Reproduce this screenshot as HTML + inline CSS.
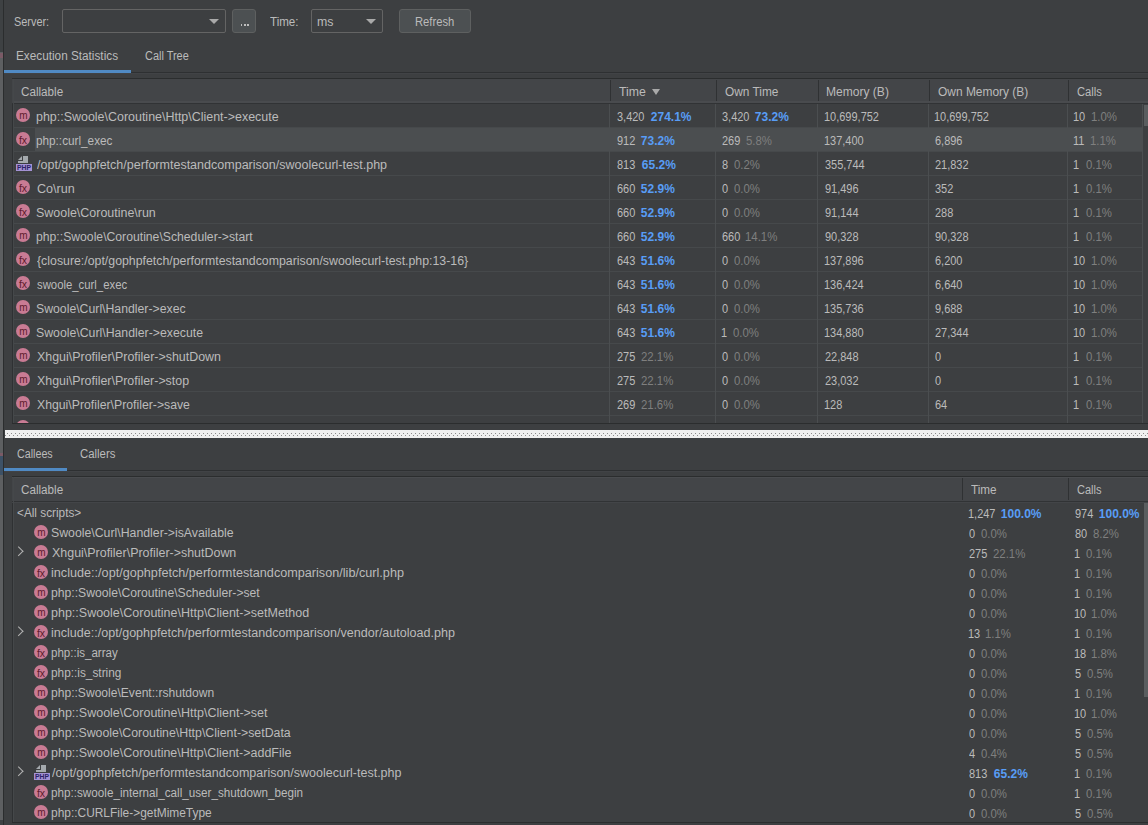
<!DOCTYPE html><html><head><meta charset="utf-8"><style>
html,body{margin:0;padding:0}
body{width:1148px;height:825px;overflow:hidden;position:relative;background:#3d3f41;font-family:"Liberation Sans", sans-serif}
.t{position:absolute;white-space:pre;line-height:16px;height:16px;display:block;transform-origin:0 0}
.combo{position:absolute;border:1px solid #646464;border-radius:2px}
.btn{position:absolute;border:1px solid #5e6060;border-radius:3px;background:#4c5052}
.arrow{position:absolute;width:0;height:0;border-left:5px solid transparent;border-right:5px solid transparent;border-top:5px solid #a9a9a9}
.sortarrow{position:absolute;width:0;height:0;border-left:4px solid transparent;border-right:4px solid transparent;border-top:6px solid #a9a9a9}
.ico{position:absolute;width:14px;height:14px;border-radius:50%;background:#c97b94;overflow:hidden}
.ico span{position:absolute;left:0;top:1px;width:14px;line-height:14px;text-align:center;font-size:10.5px;color:#5e1a2c}
.ico span.m{top:0.5px;font-size:10px;left:0.5px}
.phpico{position:absolute;width:16px;height:16px}
.phpico .pg{position:absolute;left:4px;top:0;width:8px;height:7px;background:#9a9ea2}
.phpico .lbl{position:absolute;left:0;top:8px;width:16px;height:7px;background:#8877cc;color:#2a2060;font-size:7px;line-height:7px;font-weight:bold;text-align:center;overflow:hidden}
.chev{position:absolute;width:5.5px;height:5.5px;border-right:1.6px solid #b4b4b4;border-bottom:1.6px solid #b4b4b4;transform:rotate(-45deg)}
.splitter{position:absolute;background-color:#f2f2f2;background-image:radial-gradient(#6a6a6a 0.7px, transparent 0.9px),radial-gradient(#6a6a6a 0.7px, transparent 0.9px);background-size:5px 5px;background-position:1px 1px, 3.5px 3.5px}
</style></head><body><div style="position:absolute;left:0px;top:0px;width:3px;height:825px;background:#3e4143;"></div><div style="position:absolute;left:0px;top:52px;width:3px;height:768px;background:#5d5f61;"></div><div style="position:absolute;left:0px;top:53px;width:3px;height:5px;background:#7a5a66;"></div><div style="position:absolute;left:0px;top:453px;width:3px;height:3px;background:#7a5a66;"></div><div style="position:absolute;left:0px;top:456px;width:3px;height:19px;background:#3d5166;"></div><div style="position:absolute;left:3px;top:0px;width:1px;height:825px;background:#2b2d2e;"></div><div class="combo" style="left:62px;top:9px;width:162px;height:22px"></div><div class="arrow" style="left:209px;top:19px"></div><div class="btn" style="left:232px;top:9px;width:22px;height:22px"></div><div style="position:absolute;left:240.6px;top:24px;width:1.7px;height:2px;background:#bdbdbd;"></div><div style="position:absolute;left:243.9px;top:24px;width:1.7px;height:2px;background:#bdbdbd;"></div><div style="position:absolute;left:247.2px;top:24px;width:1.7px;height:2px;background:#bdbdbd;"></div><div class="combo" style="left:311px;top:9px;width:70px;height:22px"></div><div class="arrow" style="left:366px;top:19px"></div><div class="btn" style="left:399px;top:9px;width:70px;height:22px"></div><div style="position:absolute;left:4px;top:72px;width:1144px;height:1px;background:#2e3032;"></div><div style="position:absolute;left:4px;top:70px;width:127px;height:3px;background:#508ac4;"></div><div style="position:absolute;left:4px;top:73px;width:1144px;height:1px;background:#414346;"></div><div style="position:absolute;left:12px;top:78px;width:1px;height:345px;background:#2f3133;"></div><div style="position:absolute;left:12px;top:78px;width:1136px;height:1px;background:#2b2d2e;"></div><div style="position:absolute;left:12px;top:79px;width:1136px;height:24px;background:#434548;"></div><div style="position:absolute;left:12px;top:103px;width:1136px;height:1px;background:#313335;"></div><div style="position:absolute;left:610px;top:80px;width:1px;height:22px;background:#2f3133;"></div><div style="position:absolute;left:716px;top:80px;width:1px;height:22px;background:#2f3133;"></div><div style="position:absolute;left:818px;top:80px;width:1px;height:22px;background:#2f3133;"></div><div style="position:absolute;left:929px;top:80px;width:1px;height:22px;background:#2f3133;"></div><div style="position:absolute;left:1068px;top:80px;width:1px;height:22px;background:#2f3133;"></div><div style="position:absolute;left:13px;top:101px;width:1135px;height:2px;background:#494b4e;"></div><div class="sortarrow" style="left:652px;top:89px"></div><div style="position:absolute;left:13px;top:127px;width:1130px;height:1px;background:#46494b;"></div><div class="ico" style="left:16px;top:108px"><span class="m">m</span></div><div style="position:absolute;left:13px;top:128px;width:1130px;height:23px;background:#4b4e50;"></div><div style="position:absolute;left:13px;top:128px;width:22px;height:23px;background:#3f4244;"></div><div style="position:absolute;left:13px;top:151px;width:1130px;height:1px;background:#46494b;"></div><div class="ico" style="left:16px;top:132px"><span class="fx">fx</span></div><div style="position:absolute;left:13px;top:175px;width:1130px;height:1px;background:#46494b;"></div><svg style="position:absolute;left:16px;top:155px" width="16" height="16"><path d="M2 5 L6 1 L6 5 Z M7 1 H12 V8 H2 V6 H7 Z" fill="#a4a9ad"/><rect x="0" y="9" width="16" height="7" fill="#a392d4"/><text x="8" y="15.3" text-anchor="middle" font-family="Liberation Sans" font-weight="bold" font-size="8" textLength="14" lengthAdjust="spacingAndGlyphs" fill="#2b2166">PHP</text></svg><div style="position:absolute;left:13px;top:199px;width:1130px;height:1px;background:#46494b;"></div><div class="ico" style="left:16px;top:180px"><span class="fx">fx</span></div><div style="position:absolute;left:13px;top:223px;width:1130px;height:1px;background:#46494b;"></div><div class="ico" style="left:16px;top:204px"><span class="fx">fx</span></div><div style="position:absolute;left:13px;top:247px;width:1130px;height:1px;background:#46494b;"></div><div class="ico" style="left:16px;top:228px"><span class="m">m</span></div><div style="position:absolute;left:13px;top:271px;width:1130px;height:1px;background:#46494b;"></div><div class="ico" style="left:16px;top:252px"><span class="fx">fx</span></div><div style="position:absolute;left:13px;top:295px;width:1130px;height:1px;background:#46494b;"></div><div class="ico" style="left:16px;top:276px"><span class="fx">fx</span></div><div style="position:absolute;left:13px;top:319px;width:1130px;height:1px;background:#46494b;"></div><div class="ico" style="left:16px;top:300px"><span class="m">m</span></div><div style="position:absolute;left:13px;top:343px;width:1130px;height:1px;background:#46494b;"></div><div class="ico" style="left:16px;top:324px"><span class="m">m</span></div><div style="position:absolute;left:13px;top:367px;width:1130px;height:1px;background:#46494b;"></div><div class="ico" style="left:16px;top:348px"><span class="m">m</span></div><div style="position:absolute;left:13px;top:391px;width:1130px;height:1px;background:#46494b;"></div><div class="ico" style="left:16px;top:372px"><span class="m">m</span></div><div style="position:absolute;left:13px;top:415px;width:1130px;height:1px;background:#46494b;"></div><div class="ico" style="left:16px;top:396px"><span class="m">m</span></div><div style="position:absolute;left:13px;top:415px;width:1130px;height:8px;overflow:hidden"><div class="ico" style="left:3px;top:5px"></div></div><div style="position:absolute;left:609px;top:104px;width:1px;height:319px;background:#4b4e50;"></div><div style="position:absolute;left:715px;top:104px;width:1px;height:319px;background:#4b4e50;"></div><div style="position:absolute;left:817px;top:104px;width:1px;height:319px;background:#4b4e50;"></div><div style="position:absolute;left:928px;top:104px;width:1px;height:319px;background:#4b4e50;"></div><div style="position:absolute;left:1067px;top:104px;width:1px;height:319px;background:#4b4e50;"></div><div style="position:absolute;left:1142px;top:104px;width:1px;height:319px;background:#4b4e50;"></div><div style="position:absolute;left:12px;top:423px;width:1136px;height:1px;background:#2b2d2e;"></div><div style="position:absolute;left:13px;top:79px;width:1px;height:344px;background:#45484a;"></div><div style="position:absolute;left:1144px;top:105px;width:4px;height:21px;background:#5a5d5f;"></div><svg style="position:absolute;left:5px;top:430px" width="1143" height="8"><defs><pattern id="dots" x="0" y="0" width="4" height="8" patternUnits="userSpaceOnUse"><rect x="2" y="3" width="1" height="1" fill="#8c8c8c"/><rect x="0" y="5" width="1" height="1" fill="#8c8c8c"/></pattern></defs><rect width="1143" height="8" fill="#f0f0f0"/><rect width="1143" height="8" fill="url(#dots)"/></svg><div style="position:absolute;left:4px;top:470px;width:1144px;height:1px;background:#2e3032;"></div><div style="position:absolute;left:4px;top:468px;width:63px;height:3px;background:#508ac4;"></div><div style="position:absolute;left:4px;top:471px;width:1144px;height:1px;background:#414346;"></div><div style="position:absolute;left:12px;top:476px;width:1px;height:346px;background:#2f3133;"></div><div style="position:absolute;left:12px;top:476px;width:1136px;height:1px;background:#2b2d2e;"></div><div style="position:absolute;left:12px;top:477px;width:1136px;height:24px;background:#434548;"></div><div style="position:absolute;left:12px;top:501px;width:1136px;height:1px;background:#313335;"></div><div style="position:absolute;left:962px;top:478px;width:1px;height:22px;background:#2f3133;"></div><div style="position:absolute;left:1068px;top:478px;width:1px;height:22px;background:#2f3133;"></div><div style="position:absolute;left:12px;top:477px;width:1136px;height:1px;background:#4a4c4f;"></div><div style="position:absolute;left:12px;top:502px;width:1136px;height:1px;background:#434548;"></div><div class="ico" style="left:34px;top:525px"><span class="m">m</span></div><div class="chev" style="left:15px;top:548px"></div><div class="ico" style="left:34px;top:545px"><span class="m">m</span></div><div class="ico" style="left:34px;top:565px"><span class="fx">fx</span></div><div class="ico" style="left:34px;top:585px"><span class="m">m</span></div><div class="ico" style="left:34px;top:605px"><span class="m">m</span></div><div class="chev" style="left:15px;top:628px"></div><div class="ico" style="left:34px;top:625px"><span class="fx">fx</span></div><div class="ico" style="left:34px;top:645px"><span class="fx">fx</span></div><div class="ico" style="left:34px;top:665px"><span class="fx">fx</span></div><div class="ico" style="left:34px;top:685px"><span class="m">m</span></div><div class="ico" style="left:34px;top:705px"><span class="m">m</span></div><div class="ico" style="left:34px;top:725px"><span class="m">m</span></div><div class="ico" style="left:34px;top:745px"><span class="m">m</span></div><div class="chev" style="left:15px;top:768px"></div><svg style="position:absolute;left:34px;top:764px" width="16" height="16"><path d="M2 5 L6 1 L6 5 Z M7 1 H12 V8 H2 V6 H7 Z" fill="#a4a9ad"/><rect x="0" y="9" width="16" height="7" fill="#a392d4"/><text x="8" y="15.3" text-anchor="middle" font-family="Liberation Sans" font-weight="bold" font-size="8" textLength="14" lengthAdjust="spacingAndGlyphs" fill="#2b2166">PHP</text></svg><div class="ico" style="left:34px;top:785px"><span class="fx">fx</span></div><div class="ico" style="left:34px;top:805px"><span class="m">m</span></div><div style="position:absolute;left:12px;top:822px;width:1136px;height:1px;background:#2b2d2e;"></div><div style="position:absolute;left:13px;top:477px;width:1px;height:345px;background:#45484a;"></div><div style="position:absolute;left:1144px;top:503px;width:4px;height:194px;background:#5a5d5f;"></div><span class="t" id="t0" style="left:13.80px;top:14.00px;font-size:12px;color:#bbbbbb;transform:scaleX(0.9082)">Server:</span><span class="t" id="t1" style="left:270.20px;top:14.00px;font-size:12px;color:#bbbbbb;transform:scaleX(0.9652)">Time:</span><span class="t" id="t2" style="left:316.60px;top:14.00px;font-size:12px;color:#bbbbbb;transform:scaleX(1.0300)">ms</span><span class="t" id="t3" style="left:415.00px;top:14.00px;font-size:12px;color:#bbbbbb;transform:scaleX(0.9370)">Refresh</span><span class="t" id="t4" style="left:16.40px;top:48.00px;font-size:12px;color:#bbbbbb;transform:scaleX(0.9805)">Execution Statistics</span><span class="t" id="t5" style="left:144.80px;top:48.00px;font-size:12px;color:#bbbbbb;transform:scaleX(0.9105)">Call Tree</span><span class="t" id="t6" style="left:21.00px;top:84.00px;font-size:12px;color:#bbbbbb;transform:scaleX(0.9716)">Callable</span><span class="t" id="t7" style="left:619.00px;top:84.00px;font-size:12px;color:#bbbbbb;transform:scaleX(1.0240)">Time</span><span class="t" id="t8" style="left:725.00px;top:84.00px;font-size:12px;color:#bbbbbb;transform:scaleX(0.9890)">Own Time</span><span class="t" id="t9" style="left:826.00px;top:84.00px;font-size:12px;color:#bbbbbb;transform:scaleX(1.0039)">Memory (B)</span><span class="t" id="t10" style="left:938.00px;top:84.00px;font-size:12px;color:#bbbbbb;transform:scaleX(0.9957)">Own Memory (B)</span><span class="t" id="t11" style="left:1077.00px;top:84.00px;font-size:12px;color:#bbbbbb;transform:scaleX(0.9350)">Calls</span><span class="t" id="t12" style="left:35.80px;top:108.50px;font-size:12px;color:#bbbbbb;transform:scaleX(1.0377)">php::Swoole\Coroutine\Http\Client-&gt;execute</span><span class="t" id="t13" style="left:617.00px;top:109.00px;font-size:12px;color:#bbbbbb;transform:scaleX(0.9150)">3,420</span><span class="t" id="t14" style="left:650.80px;top:109.00px;font-size:12px;color:#589df6;font-weight:bold;transform:scaleX(1.0000)">274.1%</span><span class="t" id="t15" style="left:722.00px;top:109.00px;font-size:12px;color:#bbbbbb;transform:scaleX(0.9150)">3,420</span><span class="t" id="t16" style="left:754.80px;top:109.00px;font-size:12px;color:#589df6;font-weight:bold;transform:scaleX(1.0000)">73.2%</span><span class="t" id="t17" style="left:823.60px;top:109.00px;font-size:12px;color:#bbbbbb;transform:scaleX(0.9150)">10,699,752</span><span class="t" id="t18" style="left:934.00px;top:109.00px;font-size:12px;color:#bbbbbb;transform:scaleX(0.9150)">10,699,752</span><span class="t" id="t19" style="left:1073.00px;top:109.00px;font-size:12px;color:#bbbbbb;transform:scaleX(0.9150)">10</span><span class="t" id="t20" style="left:1090.80px;top:109.00px;font-size:12px;color:#7f7f7f;transform:scaleX(0.9500)">1.0%</span><span class="t" id="t21" style="left:35.80px;top:132.50px;font-size:12px;color:#bbbbbb;transform:scaleX(0.9792)">php::curl_exec</span><span class="t" id="t22" style="left:617.00px;top:133.00px;font-size:12px;color:#bbbbbb;transform:scaleX(0.9150)">912</span><span class="t" id="t23" style="left:640.80px;top:133.00px;font-size:12px;color:#589df6;font-weight:bold;transform:scaleX(1.0000)">73.2%</span><span class="t" id="t24" style="left:722.00px;top:133.00px;font-size:12px;color:#bbbbbb;transform:scaleX(0.9150)">269</span><span class="t" id="t25" style="left:745.80px;top:133.00px;font-size:12px;color:#7f7f7f;transform:scaleX(0.9500)">5.8%</span><span class="t" id="t26" style="left:823.60px;top:133.00px;font-size:12px;color:#bbbbbb;transform:scaleX(0.9150)">137,400</span><span class="t" id="t27" style="left:935.00px;top:133.00px;font-size:12px;color:#bbbbbb;transform:scaleX(0.9150)">6,896</span><span class="t" id="t28" style="left:1073.00px;top:133.00px;font-size:12px;color:#bbbbbb;transform:scaleX(0.9150)">11</span><span class="t" id="t29" style="left:1089.80px;top:133.00px;font-size:12px;color:#7f7f7f;transform:scaleX(0.9500)">1.1%</span><span class="t" id="t30" style="left:36.80px;top:156.50px;font-size:12px;color:#bbbbbb;transform:scaleX(1.0434)">/opt/gophpfetch/performtestandcomparison/swoolecurl-test.php</span><span class="t" id="t31" style="left:617.00px;top:157.00px;font-size:12px;color:#bbbbbb;transform:scaleX(0.9150)">813</span><span class="t" id="t32" style="left:641.80px;top:157.00px;font-size:12px;color:#589df6;font-weight:bold;transform:scaleX(1.0000)">65.2%</span><span class="t" id="t33" style="left:722.00px;top:157.00px;font-size:12px;color:#bbbbbb;transform:scaleX(0.9150)">8</span><span class="t" id="t34" style="left:733.80px;top:157.00px;font-size:12px;color:#7f7f7f;transform:scaleX(0.9500)">0.2%</span><span class="t" id="t35" style="left:824.60px;top:157.00px;font-size:12px;color:#bbbbbb;transform:scaleX(0.9150)">355,744</span><span class="t" id="t36" style="left:935.00px;top:157.00px;font-size:12px;color:#bbbbbb;transform:scaleX(0.9150)">21,832</span><span class="t" id="t37" style="left:1073.00px;top:157.00px;font-size:12px;color:#bbbbbb;transform:scaleX(0.9150)">1</span><span class="t" id="t38" style="left:1085.80px;top:157.00px;font-size:12px;color:#7f7f7f;transform:scaleX(0.9500)">0.1%</span><span class="t" id="t39" style="left:36.80px;top:180.50px;font-size:12px;color:#bbbbbb;transform:scaleX(1.0468)">Co\run</span><span class="t" id="t40" style="left:617.00px;top:181.00px;font-size:12px;color:#bbbbbb;transform:scaleX(0.9150)">660</span><span class="t" id="t41" style="left:640.80px;top:181.00px;font-size:12px;color:#589df6;font-weight:bold;transform:scaleX(1.0000)">52.9%</span><span class="t" id="t42" style="left:722.00px;top:181.00px;font-size:12px;color:#bbbbbb;transform:scaleX(0.9150)">0</span><span class="t" id="t43" style="left:733.80px;top:181.00px;font-size:12px;color:#7f7f7f;transform:scaleX(0.9500)">0.0%</span><span class="t" id="t44" style="left:824.60px;top:181.00px;font-size:12px;color:#bbbbbb;transform:scaleX(0.9150)">91,496</span><span class="t" id="t45" style="left:935.00px;top:181.00px;font-size:12px;color:#bbbbbb;transform:scaleX(0.9150)">352</span><span class="t" id="t46" style="left:1073.00px;top:181.00px;font-size:12px;color:#bbbbbb;transform:scaleX(0.9150)">1</span><span class="t" id="t47" style="left:1085.80px;top:181.00px;font-size:12px;color:#7f7f7f;transform:scaleX(0.9500)">0.1%</span><span class="t" id="t48" style="left:35.80px;top:204.50px;font-size:12px;color:#bbbbbb;transform:scaleX(1.0380)">Swoole\Coroutine\run</span><span class="t" id="t49" style="left:617.00px;top:205.00px;font-size:12px;color:#bbbbbb;transform:scaleX(0.9150)">660</span><span class="t" id="t50" style="left:640.80px;top:205.00px;font-size:12px;color:#589df6;font-weight:bold;transform:scaleX(1.0000)">52.9%</span><span class="t" id="t51" style="left:722.00px;top:205.00px;font-size:12px;color:#bbbbbb;transform:scaleX(0.9150)">0</span><span class="t" id="t52" style="left:733.80px;top:205.00px;font-size:12px;color:#7f7f7f;transform:scaleX(0.9500)">0.0%</span><span class="t" id="t53" style="left:824.60px;top:205.00px;font-size:12px;color:#bbbbbb;transform:scaleX(0.9150)">91,144</span><span class="t" id="t54" style="left:935.00px;top:205.00px;font-size:12px;color:#bbbbbb;transform:scaleX(0.9150)">288</span><span class="t" id="t55" style="left:1073.00px;top:205.00px;font-size:12px;color:#bbbbbb;transform:scaleX(0.9150)">1</span><span class="t" id="t56" style="left:1085.80px;top:205.00px;font-size:12px;color:#7f7f7f;transform:scaleX(0.9500)">0.1%</span><span class="t" id="t57" style="left:35.80px;top:228.50px;font-size:12px;color:#bbbbbb;transform:scaleX(1.0164)">php::Swoole\Coroutine\Scheduler-&gt;start</span><span class="t" id="t58" style="left:617.00px;top:229.00px;font-size:12px;color:#bbbbbb;transform:scaleX(0.9150)">660</span><span class="t" id="t59" style="left:640.80px;top:229.00px;font-size:12px;color:#589df6;font-weight:bold;transform:scaleX(1.0000)">52.9%</span><span class="t" id="t60" style="left:722.00px;top:229.00px;font-size:12px;color:#bbbbbb;transform:scaleX(0.9150)">660</span><span class="t" id="t61" style="left:744.80px;top:229.00px;font-size:12px;color:#7f7f7f;transform:scaleX(0.9500)">14.1%</span><span class="t" id="t62" style="left:824.60px;top:229.00px;font-size:12px;color:#bbbbbb;transform:scaleX(0.9150)">90,328</span><span class="t" id="t63" style="left:935.00px;top:229.00px;font-size:12px;color:#bbbbbb;transform:scaleX(0.9150)">90,328</span><span class="t" id="t64" style="left:1073.00px;top:229.00px;font-size:12px;color:#bbbbbb;transform:scaleX(0.9150)">1</span><span class="t" id="t65" style="left:1085.80px;top:229.00px;font-size:12px;color:#7f7f7f;transform:scaleX(0.9500)">0.1%</span><span class="t" id="t66" style="left:36.80px;top:252.50px;font-size:12px;color:#bbbbbb;transform:scaleX(1.0276)">{closure:/opt/gophpfetch/performtestandcomparison/swoolecurl-test.php:13-16}</span><span class="t" id="t67" style="left:617.00px;top:253.00px;font-size:12px;color:#bbbbbb;transform:scaleX(0.9150)">643</span><span class="t" id="t68" style="left:640.80px;top:253.00px;font-size:12px;color:#589df6;font-weight:bold;transform:scaleX(1.0000)">51.6%</span><span class="t" id="t69" style="left:722.00px;top:253.00px;font-size:12px;color:#bbbbbb;transform:scaleX(0.9150)">0</span><span class="t" id="t70" style="left:733.80px;top:253.00px;font-size:12px;color:#7f7f7f;transform:scaleX(0.9500)">0.0%</span><span class="t" id="t71" style="left:823.60px;top:253.00px;font-size:12px;color:#bbbbbb;transform:scaleX(0.9150)">137,896</span><span class="t" id="t72" style="left:935.00px;top:253.00px;font-size:12px;color:#bbbbbb;transform:scaleX(0.9150)">6,200</span><span class="t" id="t73" style="left:1073.00px;top:253.00px;font-size:12px;color:#bbbbbb;transform:scaleX(0.9150)">10</span><span class="t" id="t74" style="left:1090.80px;top:253.00px;font-size:12px;color:#7f7f7f;transform:scaleX(0.9500)">1.0%</span><span class="t" id="t75" style="left:36.80px;top:276.50px;font-size:12px;color:#bbbbbb;transform:scaleX(0.9449)">swoole_curl_exec</span><span class="t" id="t76" style="left:617.00px;top:277.00px;font-size:12px;color:#bbbbbb;transform:scaleX(0.9150)">643</span><span class="t" id="t77" style="left:640.80px;top:277.00px;font-size:12px;color:#589df6;font-weight:bold;transform:scaleX(1.0000)">51.6%</span><span class="t" id="t78" style="left:722.00px;top:277.00px;font-size:12px;color:#bbbbbb;transform:scaleX(0.9150)">0</span><span class="t" id="t79" style="left:733.80px;top:277.00px;font-size:12px;color:#7f7f7f;transform:scaleX(0.9500)">0.0%</span><span class="t" id="t80" style="left:823.60px;top:277.00px;font-size:12px;color:#bbbbbb;transform:scaleX(0.9150)">136,424</span><span class="t" id="t81" style="left:935.00px;top:277.00px;font-size:12px;color:#bbbbbb;transform:scaleX(0.9150)">6,640</span><span class="t" id="t82" style="left:1073.00px;top:277.00px;font-size:12px;color:#bbbbbb;transform:scaleX(0.9150)">10</span><span class="t" id="t83" style="left:1090.80px;top:277.00px;font-size:12px;color:#7f7f7f;transform:scaleX(0.9500)">1.0%</span><span class="t" id="t84" style="left:35.80px;top:300.50px;font-size:12px;color:#bbbbbb;transform:scaleX(1.0218)">Swoole\Curl\Handler-&gt;exec</span><span class="t" id="t85" style="left:617.00px;top:301.00px;font-size:12px;color:#bbbbbb;transform:scaleX(0.9150)">643</span><span class="t" id="t86" style="left:640.80px;top:301.00px;font-size:12px;color:#589df6;font-weight:bold;transform:scaleX(1.0000)">51.6%</span><span class="t" id="t87" style="left:722.00px;top:301.00px;font-size:12px;color:#bbbbbb;transform:scaleX(0.9150)">0</span><span class="t" id="t88" style="left:733.80px;top:301.00px;font-size:12px;color:#7f7f7f;transform:scaleX(0.9500)">0.0%</span><span class="t" id="t89" style="left:823.60px;top:301.00px;font-size:12px;color:#bbbbbb;transform:scaleX(0.9150)">135,736</span><span class="t" id="t90" style="left:935.00px;top:301.00px;font-size:12px;color:#bbbbbb;transform:scaleX(0.9150)">9,688</span><span class="t" id="t91" style="left:1073.00px;top:301.00px;font-size:12px;color:#bbbbbb;transform:scaleX(0.9150)">10</span><span class="t" id="t92" style="left:1090.80px;top:301.00px;font-size:12px;color:#7f7f7f;transform:scaleX(0.9500)">1.0%</span><span class="t" id="t93" style="left:35.80px;top:324.50px;font-size:12px;color:#bbbbbb;transform:scaleX(1.0238)">Swoole\Curl\Handler-&gt;execute</span><span class="t" id="t94" style="left:617.00px;top:325.00px;font-size:12px;color:#bbbbbb;transform:scaleX(0.9150)">643</span><span class="t" id="t95" style="left:640.80px;top:325.00px;font-size:12px;color:#589df6;font-weight:bold;transform:scaleX(1.0000)">51.6%</span><span class="t" id="t96" style="left:721.00px;top:325.00px;font-size:12px;color:#bbbbbb;transform:scaleX(0.9150)">1</span><span class="t" id="t97" style="left:732.80px;top:325.00px;font-size:12px;color:#7f7f7f;transform:scaleX(0.9500)">0.0%</span><span class="t" id="t98" style="left:823.60px;top:325.00px;font-size:12px;color:#bbbbbb;transform:scaleX(0.9150)">134,880</span><span class="t" id="t99" style="left:935.00px;top:325.00px;font-size:12px;color:#bbbbbb;transform:scaleX(0.9150)">27,344</span><span class="t" id="t100" style="left:1073.00px;top:325.00px;font-size:12px;color:#bbbbbb;transform:scaleX(0.9150)">10</span><span class="t" id="t101" style="left:1090.80px;top:325.00px;font-size:12px;color:#7f7f7f;transform:scaleX(0.9500)">1.0%</span><span class="t" id="t102" style="left:36.80px;top:348.50px;font-size:12px;color:#bbbbbb;transform:scaleX(1.0351)">Xhgui\Profiler\Profiler-&gt;shutDown</span><span class="t" id="t103" style="left:617.00px;top:349.00px;font-size:12px;color:#bbbbbb;transform:scaleX(0.9150)">275</span><span class="t" id="t104" style="left:640.80px;top:349.00px;font-size:12px;color:#7f7f7f;transform:scaleX(0.9500)">22.1%</span><span class="t" id="t105" style="left:722.00px;top:349.00px;font-size:12px;color:#bbbbbb;transform:scaleX(0.9150)">0</span><span class="t" id="t106" style="left:733.80px;top:349.00px;font-size:12px;color:#7f7f7f;transform:scaleX(0.9500)">0.0%</span><span class="t" id="t107" style="left:824.60px;top:349.00px;font-size:12px;color:#bbbbbb;transform:scaleX(0.9150)">22,848</span><span class="t" id="t108" style="left:935.00px;top:349.00px;font-size:12px;color:#bbbbbb;transform:scaleX(0.9150)">0</span><span class="t" id="t109" style="left:1073.00px;top:349.00px;font-size:12px;color:#bbbbbb;transform:scaleX(0.9150)">1</span><span class="t" id="t110" style="left:1085.80px;top:349.00px;font-size:12px;color:#7f7f7f;transform:scaleX(0.9500)">0.1%</span><span class="t" id="t111" style="left:36.80px;top:372.50px;font-size:12px;color:#bbbbbb;transform:scaleX(1.0341)">Xhgui\Profiler\Profiler-&gt;stop</span><span class="t" id="t112" style="left:617.00px;top:373.00px;font-size:12px;color:#bbbbbb;transform:scaleX(0.9150)">275</span><span class="t" id="t113" style="left:640.80px;top:373.00px;font-size:12px;color:#7f7f7f;transform:scaleX(0.9500)">22.1%</span><span class="t" id="t114" style="left:722.00px;top:373.00px;font-size:12px;color:#bbbbbb;transform:scaleX(0.9150)">0</span><span class="t" id="t115" style="left:733.80px;top:373.00px;font-size:12px;color:#7f7f7f;transform:scaleX(0.9500)">0.0%</span><span class="t" id="t116" style="left:824.60px;top:373.00px;font-size:12px;color:#bbbbbb;transform:scaleX(0.9150)">23,032</span><span class="t" id="t117" style="left:935.00px;top:373.00px;font-size:12px;color:#bbbbbb;transform:scaleX(0.9150)">0</span><span class="t" id="t118" style="left:1073.00px;top:373.00px;font-size:12px;color:#bbbbbb;transform:scaleX(0.9150)">1</span><span class="t" id="t119" style="left:1085.80px;top:373.00px;font-size:12px;color:#7f7f7f;transform:scaleX(0.9500)">0.1%</span><span class="t" id="t120" style="left:36.80px;top:396.50px;font-size:12px;color:#bbbbbb;transform:scaleX(1.0213)">Xhgui\Profiler\Profiler-&gt;save</span><span class="t" id="t121" style="left:617.00px;top:397.00px;font-size:12px;color:#bbbbbb;transform:scaleX(0.9150)">269</span><span class="t" id="t122" style="left:640.80px;top:397.00px;font-size:12px;color:#7f7f7f;transform:scaleX(0.9500)">21.6%</span><span class="t" id="t123" style="left:722.00px;top:397.00px;font-size:12px;color:#bbbbbb;transform:scaleX(0.9150)">0</span><span class="t" id="t124" style="left:733.80px;top:397.00px;font-size:12px;color:#7f7f7f;transform:scaleX(0.9500)">0.0%</span><span class="t" id="t125" style="left:823.60px;top:397.00px;font-size:12px;color:#bbbbbb;transform:scaleX(0.9150)">128</span><span class="t" id="t126" style="left:935.00px;top:397.00px;font-size:12px;color:#bbbbbb;transform:scaleX(0.9150)">64</span><span class="t" id="t127" style="left:1073.00px;top:397.00px;font-size:12px;color:#bbbbbb;transform:scaleX(0.9150)">1</span><span class="t" id="t128" style="left:1085.80px;top:397.00px;font-size:12px;color:#7f7f7f;transform:scaleX(0.9500)">0.1%</span><span class="t" id="t129" style="left:17.00px;top:446.00px;font-size:12px;color:#bbbbbb;transform:scaleX(0.8920)">Callees</span><span class="t" id="t130" style="left:80.00px;top:446.00px;font-size:12px;color:#bbbbbb;transform:scaleX(0.9487)">Callers</span><span class="t" id="t131" style="left:21.00px;top:482.00px;font-size:12px;color:#bbbbbb;transform:scaleX(0.9716)">Callable</span><span class="t" id="t132" style="left:971.00px;top:482.00px;font-size:12px;color:#bbbbbb;transform:scaleX(0.9768)">Time</span><span class="t" id="t133" style="left:1077.00px;top:482.00px;font-size:12px;color:#bbbbbb;transform:scaleX(0.9198)">Calls</span><span class="t" id="t134" style="left:17.00px;top:504.50px;font-size:12px;color:#bbbbbb;transform:scaleX(0.9824)">&lt;All scripts&gt;</span><span class="t" id="t135" style="left:968.20px;top:505.50px;font-size:12px;color:#bbbbbb;transform:scaleX(0.9150)">1,247</span><span class="t" id="t136" style="left:1000.80px;top:505.50px;font-size:12px;color:#589df6;font-weight:bold;transform:scaleX(1.0000)">100.0%</span><span class="t" id="t137" style="left:1074.80px;top:505.50px;font-size:12px;color:#bbbbbb;transform:scaleX(0.9150)">974</span><span class="t" id="t138" style="left:1098.80px;top:505.50px;font-size:12px;color:#589df6;font-weight:bold;transform:scaleX(1.0000)">100.0%</span><span class="t" id="t139" style="left:51.40px;top:524.50px;font-size:12px;color:#bbbbbb;transform:scaleX(1.0243)">Swoole\Curl\Handler-&gt;isAvailable</span><span class="t" id="t140" style="left:969.20px;top:525.50px;font-size:12px;color:#bbbbbb;transform:scaleX(0.9150)">0</span><span class="t" id="t141" style="left:980.80px;top:525.50px;font-size:12px;color:#7f7f7f;transform:scaleX(0.9500)">0.0%</span><span class="t" id="t142" style="left:1074.80px;top:525.50px;font-size:12px;color:#bbbbbb;transform:scaleX(0.9150)">80</span><span class="t" id="t143" style="left:1092.80px;top:525.50px;font-size:12px;color:#7f7f7f;transform:scaleX(0.9500)">8.2%</span><span class="t" id="t144" style="left:52.40px;top:544.50px;font-size:12px;color:#bbbbbb;transform:scaleX(1.0368)">Xhgui\Profiler\Profiler-&gt;shutDown</span><span class="t" id="t145" style="left:969.20px;top:545.50px;font-size:12px;color:#bbbbbb;transform:scaleX(0.9150)">275</span><span class="t" id="t146" style="left:992.80px;top:545.50px;font-size:12px;color:#7f7f7f;transform:scaleX(0.9500)">22.1%</span><span class="t" id="t147" style="left:1073.80px;top:545.50px;font-size:12px;color:#bbbbbb;transform:scaleX(0.9150)">1</span><span class="t" id="t148" style="left:1085.80px;top:545.50px;font-size:12px;color:#7f7f7f;transform:scaleX(0.9500)">0.1%</span><span class="t" id="t149" style="left:51.40px;top:564.50px;font-size:12px;color:#bbbbbb;transform:scaleX(1.0540)">include::/opt/gophpfetch/performtestandcomparison/lib/curl.php</span><span class="t" id="t150" style="left:969.20px;top:565.50px;font-size:12px;color:#bbbbbb;transform:scaleX(0.9150)">0</span><span class="t" id="t151" style="left:980.80px;top:565.50px;font-size:12px;color:#7f7f7f;transform:scaleX(0.9500)">0.0%</span><span class="t" id="t152" style="left:1073.80px;top:565.50px;font-size:12px;color:#bbbbbb;transform:scaleX(0.9150)">1</span><span class="t" id="t153" style="left:1085.80px;top:565.50px;font-size:12px;color:#7f7f7f;transform:scaleX(0.9500)">0.1%</span><span class="t" id="t154" style="left:51.40px;top:584.50px;font-size:12px;color:#bbbbbb;transform:scaleX(1.0144)">php::Swoole\Coroutine\Scheduler-&gt;set</span><span class="t" id="t155" style="left:969.20px;top:585.50px;font-size:12px;color:#bbbbbb;transform:scaleX(0.9150)">0</span><span class="t" id="t156" style="left:980.80px;top:585.50px;font-size:12px;color:#7f7f7f;transform:scaleX(0.9500)">0.0%</span><span class="t" id="t157" style="left:1073.80px;top:585.50px;font-size:12px;color:#bbbbbb;transform:scaleX(0.9150)">1</span><span class="t" id="t158" style="left:1085.80px;top:585.50px;font-size:12px;color:#7f7f7f;transform:scaleX(0.9500)">0.1%</span><span class="t" id="t159" style="left:51.40px;top:604.50px;font-size:12px;color:#bbbbbb;transform:scaleX(1.0418)">php::Swoole\Coroutine\Http\Client-&gt;setMethod</span><span class="t" id="t160" style="left:969.20px;top:605.50px;font-size:12px;color:#bbbbbb;transform:scaleX(0.9150)">0</span><span class="t" id="t161" style="left:980.80px;top:605.50px;font-size:12px;color:#7f7f7f;transform:scaleX(0.9500)">0.0%</span><span class="t" id="t162" style="left:1073.80px;top:605.50px;font-size:12px;color:#bbbbbb;transform:scaleX(0.9150)">10</span><span class="t" id="t163" style="left:1090.80px;top:605.50px;font-size:12px;color:#7f7f7f;transform:scaleX(0.9500)">1.0%</span><span class="t" id="t164" style="left:51.40px;top:624.50px;font-size:12px;color:#bbbbbb;transform:scaleX(1.0458)">include::/opt/gophpfetch/performtestandcomparison/vendor/autoload.php</span><span class="t" id="t165" style="left:968.20px;top:625.50px;font-size:12px;color:#bbbbbb;transform:scaleX(0.9150)">13</span><span class="t" id="t166" style="left:984.80px;top:625.50px;font-size:12px;color:#7f7f7f;transform:scaleX(0.9500)">1.1%</span><span class="t" id="t167" style="left:1073.80px;top:625.50px;font-size:12px;color:#bbbbbb;transform:scaleX(0.9150)">1</span><span class="t" id="t168" style="left:1085.80px;top:625.50px;font-size:12px;color:#7f7f7f;transform:scaleX(0.9500)">0.1%</span><span class="t" id="t169" style="left:51.40px;top:644.50px;font-size:12px;color:#bbbbbb;transform:scaleX(0.9618)">php::is_array</span><span class="t" id="t170" style="left:969.20px;top:645.50px;font-size:12px;color:#bbbbbb;transform:scaleX(0.9150)">0</span><span class="t" id="t171" style="left:980.80px;top:645.50px;font-size:12px;color:#7f7f7f;transform:scaleX(0.9500)">0.0%</span><span class="t" id="t172" style="left:1073.80px;top:645.50px;font-size:12px;color:#bbbbbb;transform:scaleX(0.9150)">18</span><span class="t" id="t173" style="left:1090.80px;top:645.50px;font-size:12px;color:#7f7f7f;transform:scaleX(0.9500)">1.8%</span><span class="t" id="t174" style="left:51.40px;top:664.50px;font-size:12px;color:#bbbbbb;transform:scaleX(0.9857)">php::is_string</span><span class="t" id="t175" style="left:969.20px;top:665.50px;font-size:12px;color:#bbbbbb;transform:scaleX(0.9150)">0</span><span class="t" id="t176" style="left:980.80px;top:665.50px;font-size:12px;color:#7f7f7f;transform:scaleX(0.9500)">0.0%</span><span class="t" id="t177" style="left:1074.80px;top:665.50px;font-size:12px;color:#bbbbbb;transform:scaleX(0.9150)">5</span><span class="t" id="t178" style="left:1086.80px;top:665.50px;font-size:12px;color:#7f7f7f;transform:scaleX(0.9500)">0.5%</span><span class="t" id="t179" style="left:51.40px;top:684.50px;font-size:12px;color:#bbbbbb;transform:scaleX(1.0063)">php::Swoole\Event::rshutdown</span><span class="t" id="t180" style="left:969.20px;top:685.50px;font-size:12px;color:#bbbbbb;transform:scaleX(0.9150)">0</span><span class="t" id="t181" style="left:980.80px;top:685.50px;font-size:12px;color:#7f7f7f;transform:scaleX(0.9500)">0.0%</span><span class="t" id="t182" style="left:1073.80px;top:685.50px;font-size:12px;color:#bbbbbb;transform:scaleX(0.9150)">1</span><span class="t" id="t183" style="left:1085.80px;top:685.50px;font-size:12px;color:#7f7f7f;transform:scaleX(0.9500)">0.1%</span><span class="t" id="t184" style="left:51.40px;top:704.50px;font-size:12px;color:#bbbbbb;transform:scaleX(1.0421)">php::Swoole\Coroutine\Http\Client-&gt;set</span><span class="t" id="t185" style="left:969.20px;top:705.50px;font-size:12px;color:#bbbbbb;transform:scaleX(0.9150)">0</span><span class="t" id="t186" style="left:980.80px;top:705.50px;font-size:12px;color:#7f7f7f;transform:scaleX(0.9500)">0.0%</span><span class="t" id="t187" style="left:1073.80px;top:705.50px;font-size:12px;color:#bbbbbb;transform:scaleX(0.9150)">10</span><span class="t" id="t188" style="left:1090.80px;top:705.50px;font-size:12px;color:#7f7f7f;transform:scaleX(0.9500)">1.0%</span><span class="t" id="t189" style="left:51.40px;top:724.50px;font-size:12px;color:#bbbbbb;transform:scaleX(1.0283)">php::Swoole\Coroutine\Http\Client-&gt;setData</span><span class="t" id="t190" style="left:969.20px;top:725.50px;font-size:12px;color:#bbbbbb;transform:scaleX(0.9150)">0</span><span class="t" id="t191" style="left:980.80px;top:725.50px;font-size:12px;color:#7f7f7f;transform:scaleX(0.9500)">0.0%</span><span class="t" id="t192" style="left:1074.80px;top:725.50px;font-size:12px;color:#bbbbbb;transform:scaleX(0.9150)">5</span><span class="t" id="t193" style="left:1086.80px;top:725.50px;font-size:12px;color:#7f7f7f;transform:scaleX(0.9500)">0.5%</span><span class="t" id="t194" style="left:51.40px;top:744.50px;font-size:12px;color:#bbbbbb;transform:scaleX(1.0404)">php::Swoole\Coroutine\Http\Client-&gt;addFile</span><span class="t" id="t195" style="left:969.20px;top:745.50px;font-size:12px;color:#bbbbbb;transform:scaleX(0.9150)">4</span><span class="t" id="t196" style="left:980.80px;top:745.50px;font-size:12px;color:#7f7f7f;transform:scaleX(0.9500)">0.4%</span><span class="t" id="t197" style="left:1074.80px;top:745.50px;font-size:12px;color:#bbbbbb;transform:scaleX(0.9150)">5</span><span class="t" id="t198" style="left:1086.80px;top:745.50px;font-size:12px;color:#7f7f7f;transform:scaleX(0.9500)">0.5%</span><span class="t" id="t199" style="left:52.40px;top:764.50px;font-size:12px;color:#bbbbbb;transform:scaleX(1.0416)">/opt/gophpfetch/performtestandcomparison/swoolecurl-test.php</span><span class="t" id="t200" style="left:969.20px;top:765.50px;font-size:12px;color:#bbbbbb;transform:scaleX(0.9150)">813</span><span class="t" id="t201" style="left:993.80px;top:765.50px;font-size:12px;color:#589df6;font-weight:bold;transform:scaleX(1.0000)">65.2%</span><span class="t" id="t202" style="left:1073.80px;top:765.50px;font-size:12px;color:#bbbbbb;transform:scaleX(0.9150)">1</span><span class="t" id="t203" style="left:1085.80px;top:765.50px;font-size:12px;color:#7f7f7f;transform:scaleX(0.9500)">0.1%</span><span class="t" id="t204" style="left:51.40px;top:784.50px;font-size:12px;color:#bbbbbb;transform:scaleX(0.9740)">php::swoole_internal_call_user_shutdown_begin</span><span class="t" id="t205" style="left:969.20px;top:785.50px;font-size:12px;color:#bbbbbb;transform:scaleX(0.9150)">0</span><span class="t" id="t206" style="left:980.80px;top:785.50px;font-size:12px;color:#7f7f7f;transform:scaleX(0.9500)">0.0%</span><span class="t" id="t207" style="left:1073.80px;top:785.50px;font-size:12px;color:#bbbbbb;transform:scaleX(0.9150)">1</span><span class="t" id="t208" style="left:1085.80px;top:785.50px;font-size:12px;color:#7f7f7f;transform:scaleX(0.9500)">0.1%</span><span class="t" id="t209" style="left:51.40px;top:804.50px;font-size:12px;color:#bbbbbb;transform:scaleX(0.9938)">php::CURLFile-&gt;getMimeType</span><span class="t" id="t210" style="left:969.20px;top:805.50px;font-size:12px;color:#bbbbbb;transform:scaleX(0.9150)">0</span><span class="t" id="t211" style="left:980.80px;top:805.50px;font-size:12px;color:#7f7f7f;transform:scaleX(0.9500)">0.0%</span><span class="t" id="t212" style="left:1074.80px;top:805.50px;font-size:12px;color:#bbbbbb;transform:scaleX(0.9150)">5</span><span class="t" id="t213" style="left:1086.80px;top:805.50px;font-size:12px;color:#7f7f7f;transform:scaleX(0.9500)">0.5%</span></body></html>
